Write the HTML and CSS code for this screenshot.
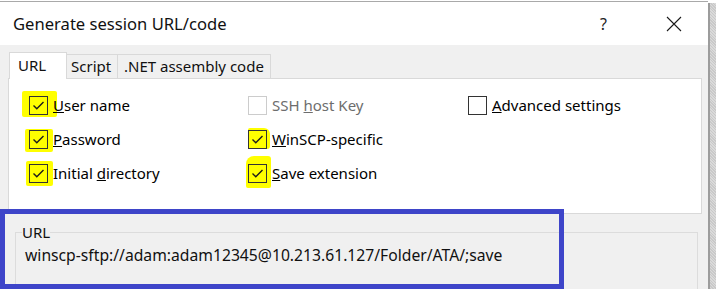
FILE: index.html
```
<!DOCTYPE html>
<html>
<head>
<meta charset="utf-8">
<link rel="stylesheet" href="styles.css">
</head>
<body>
<div class="screen">
  <div class="win">
    <div class="titlebar">
      <span class="title">Generate session URL/code</span>
      <span class="help">?</span>
      <svg class="close" width="16" height="16" viewBox="0 0 16 16"><path d="M1 1 L15 15 M15 1 L1 15" stroke="#1a1a1a" stroke-width="1.1" fill="none"/></svg>
    </div>
    <div class="client">
      <div class="tabs">
        <div class="tab active">URL</div>
        <div class="tab tab-script">Script</div>
        <div class="tab tab-net">.NET assembly code</div>
      </div>
      <div class="panel">
        <div class="grid">
          <label class="check"><span class="hl hl-1"></span><span class="box on"><svg width="17" height="17" viewBox="0 0 17 17"><path d="M3.5 8.5 L6.8 11.8 L13.5 5" stroke="#1c1c1c" stroke-width="1.4" fill="none"/></svg></span><span class="lbl"><u>U</u>ser name</span></label>
          <label class="check disabled"><span class="box"></span><span class="lbl">SSH <u>h</u>ost Key</span></label>
          <label class="check"><span class="box"></span><span class="lbl"><u>A</u>dvanced settings</span></label>
          <label class="check"><span class="hl hl-2"></span><span class="box on"><svg width="17" height="17" viewBox="0 0 17 17"><path d="M3.5 8.5 L6.8 11.8 L13.5 5" stroke="#1c1c1c" stroke-width="1.4" fill="none"/></svg></span><span class="lbl"><u>P</u>assword</span></label>
          <label class="check"><span class="hl hl-4"></span><span class="box on"><svg width="17" height="17" viewBox="0 0 17 17"><path d="M3.5 8.5 L6.8 11.8 L13.5 5" stroke="#1c1c1c" stroke-width="1.4" fill="none"/></svg></span><span class="lbl"><u>W</u>inSCP-specific</span></label>
          <span></span>
          <label class="check"><span class="hl hl-3"></span><span class="box on"><svg width="17" height="17" viewBox="0 0 17 17"><path d="M3.5 8.5 L6.8 11.8 L13.5 5" stroke="#1c1c1c" stroke-width="1.4" fill="none"/></svg></span><span class="lbl">Initial <u>d</u>irectory</span></label>
          <label class="check"><span class="hl hl-5"></span><span class="box on"><svg width="17" height="17" viewBox="0 0 17 17"><path d="M3.5 8.5 L6.8 11.8 L13.5 5" stroke="#1c1c1c" stroke-width="1.4" fill="none"/></svg></span><span class="lbl"><u>S</u>ave extension</span></label>
          <span></span>
        </div>
      </div>
      <fieldset class="group">
        <legend>URL</legend>
        <div class="url">winscp-sftp://adam:adam12345@10.213.61.127/Folder/ATA/;save</div>
      </fieldset>
    </div>
  </div>
  <div class="edge"></div>
  <div class="callout"></div>
</div>
</body>
</html>
```
FILE: styles.css
```
html, body {
  margin: 0;
  padding: 0;
}
body {
  width: 716px;
  height: 289px;
  overflow: hidden;
  background: #ffffff;
  font-family: "Noto Sans", "Open Sans", sans-serif;
  font-size: 15px;
  color: #000;
}
.screen {
  position: relative;
  display: flex;
  height: 289px;
  padding-top: 1px;
  box-sizing: border-box;
}
.win {
  width: 708px;
  display: flex;
  flex-direction: column;
  border-top: 1px solid #a9a9a9;
  overflow: hidden;
}
.edge {
  width: 6px;
  margin-top: 2px;
  border-left: 2px solid #9c9c9c;
  background: repeating-linear-gradient(45deg, #c9c9c9 0 1px, #dadada 1px 2px);
}
.titlebar {
  flex-shrink: 0;
  height: 43px;
  background: #fff;
  display: flex;
  align-items: center;
  padding-left: 13px;
  font-size: 16.6px;
}
.title {
  flex: 1;
  color: #111;
}
.help {
  width: 10px;
  margin-right: 56px;
  color: #222;
  font-size: 16px;
}
.close {
  margin-right: 26px;
}
.client {
  flex: 1 0 auto;
  background: #f0f0f0;
  padding: 7px 0 0 8px;
}
.tabs {
  display: flex;
  align-items: flex-end;
  height: 26px;
  padding-left: 1px;
}
.tab {
  height: 24px;
  box-sizing: border-box;
  border: 1px solid #d9d9d9;
  border-bottom: none;
  border-left: none;
  padding: 0 0 0 4px;
  line-height: 22px;
  color: #111;
  white-space: nowrap;
}
.tab-script {
  width: 51px;
}
.tab-net {
  width: 153px;
  padding-left: 6px;
}
.tab.active {
  height: 27px;
  width: 58px;
  border-left: 1px solid #d9d9d9;
  background: #fff;
  margin-bottom: -1px;
  position: relative;
  z-index: 1;
  padding-left: 8px;
  line-height: 24px;
}
.panel {
  width: 694px;
  height: 136px;
  box-sizing: border-box;
  background: #fff;
  border: 1px solid #d9d9d9;
  padding: 17px 0 0 20px;
}
.grid {
  display: grid;
  grid-template-columns: 219px 220px 200px;
  grid-auto-rows: 34px;
}
.check {
  position: relative;
  display: flex;
  align-items: flex-start;
  gap: 5px;
}
.box {
  position: relative;
  width: 19px;
  height: 19px;
  box-sizing: border-box;
  border: 1px solid #333;
  background: #fff;
  display: flex;
}
.box.on {
  background: transparent;
}
.disabled .box {
  border-color: #cccccc;
}
.disabled .lbl {
  color: #6d6d6d;
}
.lbl {
  position: relative;
  line-height: 19px;
  white-space: nowrap;
}
.hl {
  position: absolute;
  background: #ffff00;
  border-radius: 2px;
}
.hl-1 { left: -7px; top: -5px; width: 35px; height: 26px; }
.hl-2 { left: -4px; top: -1px; width: 28px; height: 23px; }
.hl-3 { left: -3px; top: -3px; width: 27px; height: 25px; }
.hl-4 { left: 0px; top: -2px; width: 22px; height: 21px; border-radius: 2px 6px 3px 2px; }
.hl-5 { left: -2px; top: -8px; width: 25px; height: 32px; border-radius: 8px 3px 2px 2px; }
fieldset.group {
  margin: 8px 0 0 7px;
  width: 683px;
  height: 80px;
  box-sizing: border-box;
  border: 1px solid #dcdcdc;
  padding: 0 0 0 9px;
}
.group legend {
  margin-left: -3px;
  padding: 0;
  line-height: 20px;
  color: #111;
}
.url {
  margin-top: 2px;
  line-height: 22px;
  font-size: 15.7px;
  color: #111;
}
.callout {
  position: absolute;
  left: 0;
  top: 209px;
  width: 564px;
  height: 80px;
  box-sizing: border-box;
  border: 5px solid #3e45c9;
}
```
